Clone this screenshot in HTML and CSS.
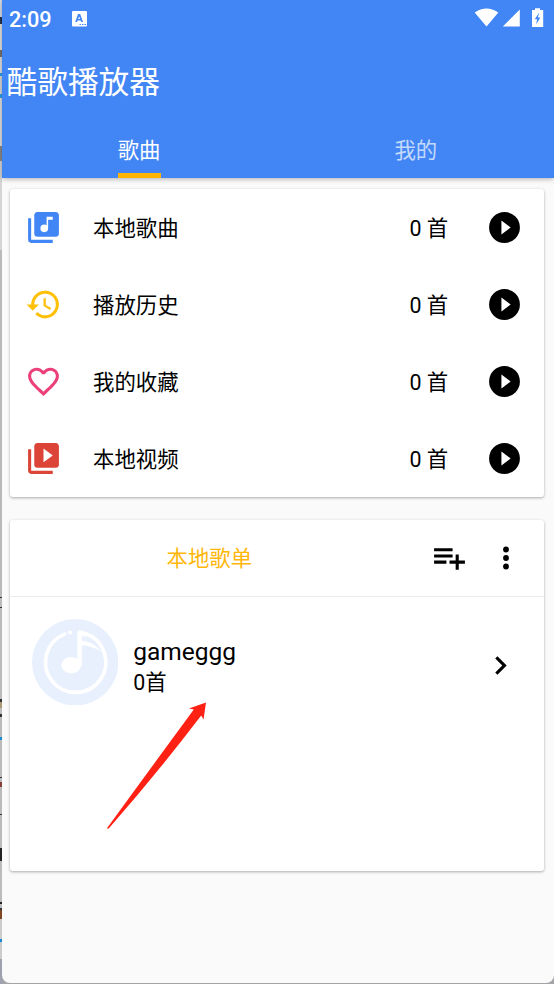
FILE: index.html
```html
<!DOCTYPE html>
<html lang="zh-CN">
<head>
<meta charset="utf-8">
<title>酷歌播放器</title>
<link rel="stylesheet" href="styles.css">
</head>
<body>
<div class="edge"></div>
<main class="app">
  <header class="header">
    <div class="status">
      <span class="time">2:09</span>
      <svg class="badge" viewBox="0 0 15 16"><path fill="#fff" fill-rule="evenodd" d="M1 0h13a1 1 0 0 1 1 1v13.500a1 1 0 0 1-1 1H1a1 1 0 0 1-1-1V1a1 1 0 0 1 1-1zM6 3 3.200 11h1.900l.5-1.500h3l.5 1.500H11L8.200 3zM7.100 5.200 8 8H6.200zM7.500 13v1H9v-1zm2.500 0v1h1.500v-1zm2.500 0v1H14v-1z"/></svg>
      <svg class="signals" viewBox="0 0 72 22"><g fill="#fff"><path d="M.7 4.500Q12.500-3.500 24.300 4.500L12.500 18.600zM45.800 1.500v17H28.800zM58 2h3V.200h5V2h3.200v17H58z"/></g><path fill="#4286f5" d="m65.300 4.500-4.600 6.700h2.400l-1 5.300 4.300-7h-2.500z"/></svg>
    </div>
    <h1>酷歌播放器</h1>
    <nav class="tabs"><span class="tab active">歌曲</span><span class="tab">我的</span></nav>
  </header>

  <section class="card library">
    <div class="row">
      <svg class="icon blue" viewBox="0 0 24 24"><path d="M20 2H8c-1.100 0-2 .9-2 2v12c0 1.100.9 2 2 2h12c1.100 0 2-.9 2-2V4c0-1.100-.9-2-2-2zm-2 5h-3v5.500a2.500 2.500 0 1 1-2.500-2.500c.57 0 1.080.19 1.500.51V5h4v2zM4 6H2v14c0 1.100.9 2 2 2h14v-2H4V6z"/></svg>
      <span class="name">本地歌曲</span><span class="count">0 首</span>
      <svg class="icon" viewBox="0 0 24 24"><path d="M12 2a10 10 0 1 0 0 20 10 10 0 0 0 0-20zm-2 14.500v-9l6 4.500-6 4.500z"/></svg>
    </div>
    <div class="row">
      <svg class="icon yellow" viewBox="0 0 24 24"><path d="M13 3a9 9 0 0 0-9 9H1l3.890 3.890.07.14L9 12H6a7 7 0 1 1 2.060 4.940l-1.420 1.420A9 9 0 1 0 13 3zm-1 5v5l4.280 2.540.72-1.210-3.500-2.080V8H12z"/></svg>
      <span class="name">播放历史</span><span class="count">0 首</span>
      <svg class="icon" viewBox="0 0 24 24"><path d="M12 2a10 10 0 1 0 0 20 10 10 0 0 0 0-20zm-2 14.500v-9l6 4.500-6 4.500z"/></svg>
    </div>
    <div class="row">
      <svg class="icon pink" viewBox="0 0 24 24"><path d="M16.500 3c-1.740 0-3.410.81-4.500 2.090C10.910 3.810 9.240 3 7.500 3 4.420 3 2 5.420 2 8.500c0 3.780 3.400 6.860 8.550 11.540L12 21.350l1.450-1.320C18.600 15.360 22 12.280 22 8.500 22 5.420 19.580 3 16.500 3zm-4.400 15.550-.1.100-.1-.1C7.140 14.240 4 11.390 4 8.500 4 6.500 5.500 5 7.500 5c1.540 0 3.040.99 3.570 2.360h1.870C13.460 5.990 14.960 5 16.500 5c2 0 3.500 1.500 3.500 3.500 0 2.890-3.140 5.740-7.900 10.050z"/></svg>
      <span class="name">我的收藏</span><span class="count">0 首</span>
      <svg class="icon" viewBox="0 0 24 24"><path d="M12 2a10 10 0 1 0 0 20 10 10 0 0 0 0-20zm-2 14.500v-9l6 4.500-6 4.500z"/></svg>
    </div>
    <div class="row">
      <svg class="icon red" viewBox="0 0 24 24"><path d="M4 6H2v14c0 1.100.9 2 2 2h14v-2H4V6zm16-4H8c-1.100 0-2 .9-2 2v12c0 1.100.9 2 2 2h12c1.100 0 2-.9 2-2V4c0-1.100-.9-2-2-2zm-8 12.500v-9l6 4.500-6 4.500z"/></svg>
      <span class="name">本地视频</span><span class="count">0 首</span>
      <svg class="icon" viewBox="0 0 24 24"><path d="M12 2a10 10 0 1 0 0 20 10 10 0 0 0 0-20zm-2 14.500v-9l6 4.500-6 4.500z"/></svg>
    </div>
  </section>

  <section class="card playlists">
    <div class="bar">
      <h2>本地歌单</h2>
      <svg class="icon" viewBox="0 0 24 24"><path d="M14 10H2v2h12v-2zm0-4H2v2h12V6zm4 8v-4h-2v4h-4v2h4v4h2v-4h4v-2h-4zM2 16h8v-2H2v2z"/></svg>
      <svg class="more" viewBox="0 0 24 24"><circle cx="12" cy="6" r="2.050"/><circle cx="12" cy="12" r="2.050"/><circle cx="12" cy="18" r="2.050"/></svg>
    </div>
    <div class="playlist">
      <svg class="cover" viewBox="0 0 86 86"><circle cx="43" cy="43" r="43" fill="#e9f0fd"/><g fill="none" stroke="#fff" stroke-width="3.600" stroke-linecap="round"><path d="M32.500 15A30 30 0 1 0 53 14.500"/><path d="M47.300 45V13.500" stroke-width="4"/></g><g fill="#fff"><circle cx="37.800" cy="13.500" r="2"/><ellipse cx="39" cy="46" rx="9.800" ry="8.200"/><path d="M45.300 13q1-3 4.500-1.200l6 2.400-2 3.500-4.500-1v5q12 1 19.500 10.800-9-6-19.500-6.500V46h-4z"/></g></svg>
      <div class="details"><span class="title">gameggg</span><span class="total">0首</span></div>
      <svg class="icon" viewBox="0 0 24 24"><path d="M10 6 8.590 7.410 13.170 12l-4.580 4.590L10 18l6-6z"/></svg>
    </div>
  </section>
</main>
<svg class="pointer" viewBox="0 0 100 128"><path fill="#ff2114" d="M99 .5 82 6.500l4.800 1Q46 63 .5 125.500q-.5 2 1.200 1Q48 74 94.200 13.500l2.300 4z"/></svg>
</body>
</html>
```

FILE: styles.css
```css
* { box-sizing: border-box; }
body {
  margin: 0;
  height: 984px;
  overflow: hidden;
  display: flex;
  background: #a5a5a9;
  color: #000;
  font-family: Roboto, "Noto Sans CJK SC", sans-serif;
  font-size: 21.4px;
}
svg { display: block; flex: none; fill: #000; }
h1, h2 { margin: 0; font-weight: 400; }
.edge {
  width: 2px;
  height: 984px;
  background: linear-gradient(#d6dbe4 0 17px, #26334d 17px 24px, #e0e0dc 24px 50px, #77716a 50px 57px, #dedede 57px 73px, #2b9be5 73px 76px, #d5d5d5 76px 94px, #2b9be5 94px 98px, #ddd 98px 146px, #888 146px 161px, #d4d4d4 161px 250px, #b9b9b9 250px 597px, #333 597px 598px, #bbb 598px 607px, #333 607px 608px, #bbb 608px 699px, #333 699px 702px, #aa9977 702px 708px, #bbb 708px 714px, #333 714px 717px, #bbb 717px 737px, #168ad8 737px 740px, #bbb 740px 777px, #333 777px 778px, #bbb 778px 782px, #863f38 782px 787px, #bbb 787px 814px, #333 814px 815px, #bbb 815px 848px, #222 848px 861px, #bbb 861px 902px, #222 902px 904px, #bbb 904px 908px, #333 908px 910px, #804522 910px 919px, #ccc 919px 939px, #168ad8 939px 942px, #ccc 942px 959px, #9fa1ae 959px);
}
.app {
  width: 552px;
  height: 983px;
  background: #fafafa;
  border-radius: 0 0 8px 8px;
}
.header {
  height: 177.500px;
  display: flex;
  flex-direction: column;
  background: #4286f5;
  color: #fff;
  box-shadow: 0 1px 5px rgba(0, 0, 0, .3);
}
.status { height: 40px; padding: 8px 8px 0 7px; display: flex; }
.time { width: 63px; font-size: 21.700px; line-height: 23px; font-weight: 500; }
.badge { width: 15px; height: 16px; margin-top: 3px; }
.signals { width: 72px; height: 22px; margin-left: auto; }
h1 { padding-left: 4.500px; height: 84px; font-size: 30.700px; line-height: 85px; }
.tabs { flex: 1; display: flex; padding-right: 1px; }
.tab { flex: 1; display: flex; justify-content: center; line-height: 53px; color: rgba(255, 255, 255, .7); }
.active { color: #fff; padding-right: 2.500px; }
.active::after { content: ""; width: 43px; height: 4.500px; margin-left: -43px; align-self: flex-end; background: #ffb400; }
.card {
  width: 534.500px;
  margin-left: 7.500px;
  background: #fff;
  border-radius: 3px;
  box-shadow: 0 1px 3px rgba(0, 0, 0, .32);
}
.library { margin-top: 11.500px; height: 308px; }
.row { height: 77px; padding: 0 21.300px 0 15.500px; display: flex; align-items: center; }
.icon { width: 37px; height: 37px; }
.blue { fill: #4286f5; }
.yellow { fill: #ffc008; }
.pink { fill: #ec4079; }
.red { fill: #db4437; }
.name { flex: 1; margin-left: 31px; padding-bottom: 2px; }
.count { margin-right: 37.500px; padding-bottom: 2px; white-space: pre; }
.playlists { margin-top: 23px; height: 351px; }
.bar { height: 77px; display: flex; align-items: center; padding-right: 21px; border-bottom: 1.500px solid #ececec; }
.bar .icon { margin-bottom: 1px; }
h2 { flex: 1; padding: 0 0 3px 157px; font-size: 21.400px; color: #ffb70a; }
.more { width: 34px; height: 34px; margin-left: 21px; }
.playlist { height: 130px; display: flex; align-items: center; padding: 0 25.500px 0 22px; }
.cover { width: 86.500px; height: 86.500px; }
.details { flex: 1; display: flex; flex-direction: column; margin: 11px 0 0 15.200px; line-height: 30px; }
.title { font-size: 24.500px; }
.total { padding-top: 1px; }
.playlist .icon { margin-top: 7px; }
.pointer { position: absolute; left: 107px; top: 702px; width: 100px; height: 128px; }
```
